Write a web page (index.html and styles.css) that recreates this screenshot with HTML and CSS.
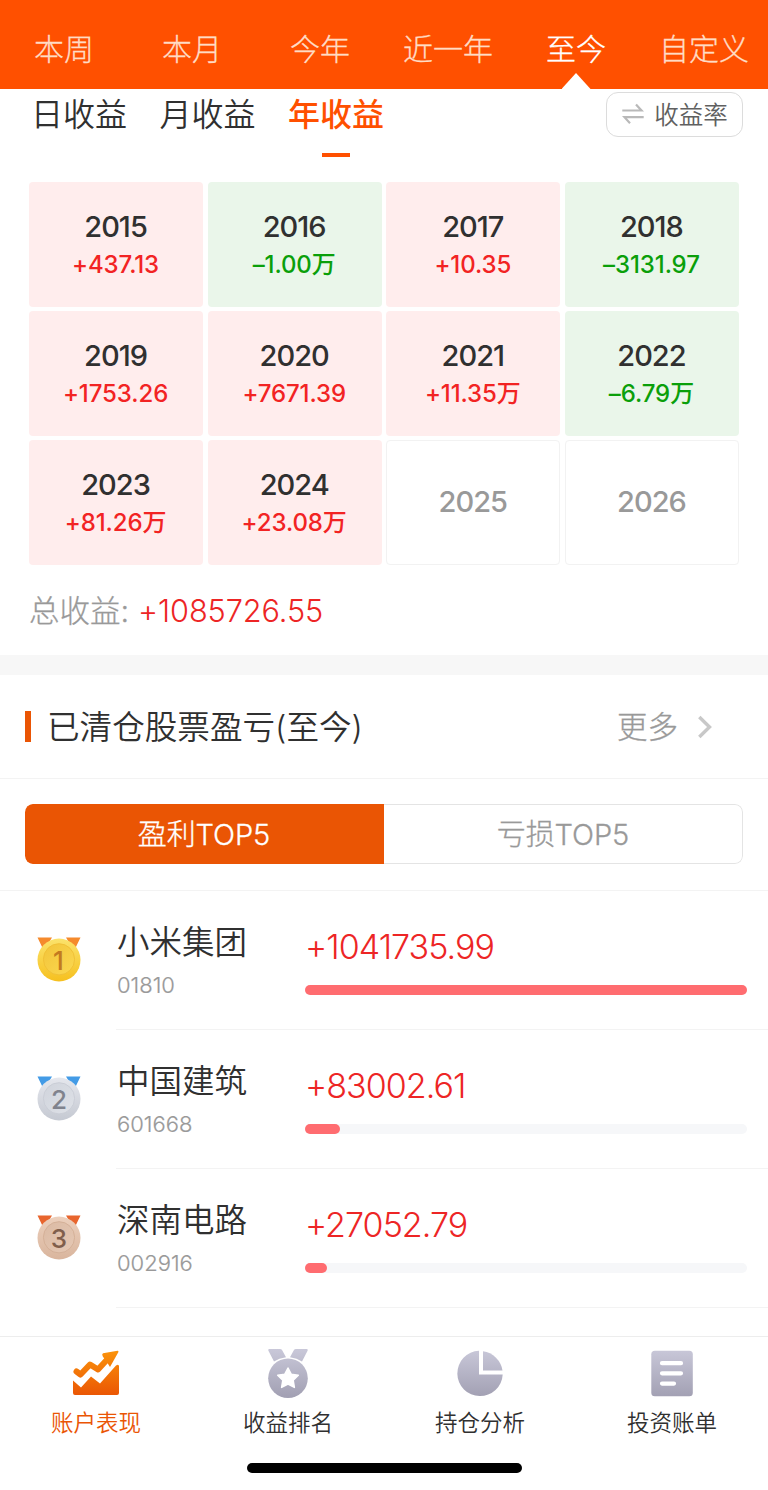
FILE: index.html
```html
<!DOCTYPE html>
<html lang="zh-CN">
<head>
<meta charset="utf-8">
<title>账户表现</title>
<link rel="stylesheet" href="styles.css">
</head>
<body>
<div class="app">
  <nav class="periods">
    <span class="period">本周</span>
    <span class="period">本月</span>
    <span class="period">今年</span>
    <span class="period">近一年</span>
    <span class="period active">至今</span>
    <span class="period">自定义</span>
  </nav>

  <section class="calendar">
    <div class="modes">
      <span class="mode">日收益</span>
      <span class="mode">月收益</span>
      <span class="mode active">年收益</span>
      <button class="rate">
        <svg class="swap" width="24" height="22" viewBox="0 0 24 22" fill="none" stroke="#b9b9b9" stroke-width="2.2"><path d="M1.300 7.500H20.500L15 1.500"/><path d="M22.700 14.200H3.500L9 20.200"/></svg>
        <span>收益率</span>
      </button>
    </div>
    <div class="years">
      <div class="cell up"><b class="year">2015</b><span class="gain">+437.13</span></div>
      <div class="cell down"><b class="year">2016</b><span class="gain">–1.00<i>万</i></span></div>
      <div class="cell up"><b class="year">2017</b><span class="gain">+10.35</span></div>
      <div class="cell down"><b class="year">2018</b><span class="gain">–3131.97</span></div>
      <div class="cell up"><b class="year">2019</b><span class="gain">+1753.26</span></div>
      <div class="cell up"><b class="year">2020</b><span class="gain">+7671.39</span></div>
      <div class="cell up"><b class="year">2021</b><span class="gain">+11.35<i>万</i></span></div>
      <div class="cell down"><b class="year">2022</b><span class="gain">–6.79<i>万</i></span></div>
      <div class="cell up"><b class="year">2023</b><span class="gain">+81.26<i>万</i></span></div>
      <div class="cell up"><b class="year">2024</b><span class="gain">+23.08<i>万</i></span></div>
      <div class="cell empty"><b class="year">2025</b></div>
      <div class="cell empty"><b class="year">2026</b></div>
    </div>
    <div class="total"><span class="total-label">总收益:</span><span class="total-value">+1085726.55</span></div>
  </section>

  <section class="cleared">
    <header class="heading">
      <h2 class="title">已清仓股票盈亏(至今)</h2>
      <a class="more"><span>更多</span><svg width="16" height="24" viewBox="0 0 16 24" fill="none" stroke="#c8c8c8" stroke-width="3.4"><path d="M2.300 2L12.500 12L2.300 22"/></svg></a>
    </header>
    <div class="switch">
      <span class="option selected">盈利TOP5</span>
      <span class="option">亏损TOP5</span>
    </div>
    <ol class="ranks">
      <li class="rank">
        <svg class="medal" width="48" height="50" viewBox="0 0 48 50">
          <defs>
            <linearGradient id="gold" x2="0" y2="1"><stop stop-color="#fbe36c"/><stop offset="1" stop-color="#f6c01f"/></linearGradient>
            <linearGradient id="goldIn" x2="1" y2="1"><stop stop-color="#f2c43a"/><stop offset="1" stop-color="#fbd850"/></linearGradient>
          </defs>
          <path fill="#f58a2c" d="M2.500 3.500H17L9 17ZM45.500 3.500H31L39 17Z"/>
          <circle cx="24" cy="26" r="21.500" fill="url(#gold)"/>
          <circle cx="24" cy="25.300" r="15.600" fill="url(#goldIn)" stroke="#efbe34" stroke-width=".9"/>
          <text class="medal-num" x="23.500" y="35.500" fill="#c37a20">1</text>
        </svg>
        <div class="stock"><span class="name">小米集团</span><span class="code">01810</span></div>
        <div class="profit"><span class="amount">+1041735.99</span><div class="bar"><div class="fill" style="width:100%"></div></div></div>
      </li>
      <li class="rank">
        <svg class="medal" width="48" height="50" viewBox="0 0 48 50">
          <defs>
            <linearGradient id="silver" x2="0" y2="1"><stop stop-color="#e5e7ed"/><stop offset="1" stop-color="#c5c9d2"/></linearGradient>
            <linearGradient id="silverIn" x2="1" y2="1"><stop stop-color="#d0d4dc"/><stop offset="1" stop-color="#dee1e7"/></linearGradient>
          </defs>
          <path fill="#439be6" d="M2.500 3.500H17L9 17ZM45.500 3.500H31L39 17Z"/>
          <circle cx="24" cy="26" r="21.500" fill="url(#silver)"/>
          <circle cx="24" cy="25.300" r="15.600" fill="url(#silverIn)" stroke="#c8ccd5" stroke-width=".9"/>
          <text class="medal-num" x="24" y="35.500" fill="#80838d">2</text>
        </svg>
        <div class="stock"><span class="name">中国建筑</span><span class="code">601668</span></div>
        <div class="profit"><span class="amount">+83002.61</span><div class="bar"><div class="fill" style="width:8%"></div></div></div>
      </li>
      <li class="rank">
        <svg class="medal" width="48" height="50" viewBox="0 0 48 50">
          <defs>
            <linearGradient id="bronze" x2="0" y2="1"><stop stop-color="#ecd0bd"/><stop offset="1" stop-color="#d9b59d"/></linearGradient>
            <linearGradient id="bronzeIn" x2="1" y2="1"><stop stop-color="#dbbaa4"/><stop offset="1" stop-color="#e5c8b4"/></linearGradient>
          </defs>
          <path fill="#e8652d" d="M2.500 3.500H17L9 17ZM45.500 3.500H31L39 17Z"/>
          <circle cx="24" cy="26" r="21.500" fill="url(#bronze)"/>
          <circle cx="24" cy="25.300" r="15.600" fill="url(#bronzeIn)" stroke="#d2ae95" stroke-width=".9"/>
          <text class="medal-num" x="24" y="35.500" fill="#805e4b">3</text>
        </svg>
        <div class="stock"><span class="name">深南电路</span><span class="code">002916</span></div>
        <div class="profit"><span class="amount">+27052.79</span><div class="bar"><div class="fill" style="width:5%"></div></div></div>
      </li>
    </ol>
  </section>

  <footer class="dock">
    <nav class="tabs">
      <a class="tab current">
        <svg width="50" height="52" viewBox="0 0 50 52">
          <defs><linearGradient id="hot" gradientUnits="userSpaceOnUse" x1="0" y1="2" x2="0" y2="48"><stop stop-color="#fb940b"/><stop offset="1" stop-color="#ea5504"/></linearGradient></defs>
          <path fill="none" stroke="url(#hot)" stroke-width="6" stroke-linejoin="round" stroke-linecap="round" d="M5.500 23.500L9.500 26.500L19 16.500L27 21.500L38 9.500"/>
          <path fill="url(#hot)" d="M32 5.200L46.500 2.800Q48 2.700 47.300 4.300L39 19L35.500 13.500L31.800 8.500Q30.500 6 32 5.200ZM2 32.500L10 39.500L20 28.500L29 35.500L45 17.500Q48 15.500 48 18.500V45Q48 47 46 47H4Q2 47 2 45Z"/>
        </svg>
        <span>账户表现</span>
      </a>
      <a class="tab">
        <svg width="50" height="52" viewBox="0 0 50 52">
          <defs><linearGradient id="cool" gradientUnits="userSpaceOnUse" x1="0" y1="1" x2="0" y2="50"><stop stop-color="#c9c8d9"/><stop offset="1" stop-color="#a19fb2"/></linearGradient></defs>
          <path fill="url(#cool)" d="M6 1H17Q18.500 1 19.200 2.300L23 9.300Q16 10.300 11 13.500L5.300 2.500Q5 1 6 1ZM44 1H33Q31.500 1 30.800 2.300L27 9.300Q34 10.300 39 13.500L44.700 2.500Q45 1 44 1Z"/>
          <circle cx="25" cy="30.300" r="19.800" fill="url(#cool)"/>
          <path fill="#fff" stroke="#fff" stroke-width="1.500" stroke-linejoin="round" d="M25 20L28.200 26.200L35.300 27.300L30.200 32.300L31.400 39.400L25 36.100L18.600 39.400L19.800 32.300L14.700 27.300L21.800 26.200Z"/>
        </svg>
        <span>收益排名</span>
      </a>
      <a class="tab">
        <svg width="50" height="52" viewBox="0 0 50 52">
          <path fill="url(#cool)" d="M24 2.700V26.500H47.700A22.700 22.700 0 1 1 24 2.700Z"/>
          <path fill="url(#cool)" d="M28 3.300A22.700 22.700 0 0 1 47.500 22.500H28Z"/>
        </svg>
        <span>持仓分析</span>
      </a>
      <a class="tab">
        <svg width="50" height="52" viewBox="0 0 50 52">
          <rect x="4.300" y="2.800" width="41.500" height="45.500" rx="3.500" fill="url(#cool)"/>
          <path fill="none" stroke="#fff" stroke-width="4.200" stroke-linecap="round" d="M15 15.200H34M15 25.300H34M15 35.600H27"/>
        </svg>
        <span>投资账单</span>
      </a>
    </nav>
    <div class="home"></div>
  </footer>
</div>
</body>
</html>
```
FILE: styles.css
```css
* { box-sizing: border-box; }
body { margin: 0; background: #fff; }
.app {
  width: 768px;
  height: 1490px;
  overflow: hidden;
  display: flex;
  flex-direction: column;
  color: #303030;
  font-family: Inter, "Noto Sans CJK SC", sans-serif;
  font-weight: 350;
}

.periods {
  height: 89px;
  flex: none;
  display: grid;
  grid-template-columns: repeat(6, 128px);
  background: #ff5000;
  color: #ffdcc5;
  font-size: 30px;
  font-weight: 300;
  -webkit-text-stroke: .3px;
  line-height: 44px;
  text-align: center;
  padding-top: 27px;
}
.period { white-space: nowrap; }
.period.active {
  color: #fff;
  display: flex;
  flex-direction: column;
  align-items: center;
  justify-content: space-between;
}
.period.active::after {
  content: "";
  width: 29px;
  height: 16px;
  background: #fff;
  clip-path: polygon(50% 0, 100% 100%, 0 100%);
}

.calendar { height: 566px; flex: none; }
.modes {
  display: flex;
  align-items: flex-start;
  height: 93px;
  padding: 3px 25px 0 31px;
  gap: 32.500px;
  font-size: 32px;
  line-height: 46px;
}
.mode { width: 96px; white-space: nowrap; }
.mode.active { color: #ff5000; font-weight: 500; }
.mode.active::after {
  content: "";
  display: block;
  width: 28px;
  height: 4px;
  margin: 15px auto 0;
  background: #ff5000;
}
.rate {
  width: 137px;
  height: 45px;
  margin-left: auto;
  padding: 0;
  display: flex;
  align-items: center;
  justify-content: center;
  gap: 9px;
  border: 1px solid #dcdcdc;
  border-radius: 12px;
  background: #fff;
  color: #606060;
  font: inherit;
  font-size: 24.500px;
}
.swap { margin-top: -2px; }
.years {
  display: grid;
  grid-template-columns: repeat(4, 1fr);
  grid-auto-rows: 124.5px;
  gap: 4.5px;
  padding: 0 29px;
}
.cell {
  border-radius: 4px;
  display: flex;
  flex-direction: column;
  align-items: center;
  justify-content: center;
}
.year { font-size: 29px; line-height: 36px; font-weight: 500; letter-spacing: -1px; margin-left: -1px; }
.up, .down { padding-top: 4px; }
.gain { margin: 2px 0 0 -1px; font-size: 24px; line-height: 36px; font-weight: 500; letter-spacing: -.1px; white-space: nowrap; }
.gain i { font-style: normal; line-height: 1; }
.up { background: #ffeded; }
.up .gain { color: #f22323; }
.down { background: #eaf6ea; }
.down .gain { color: #0a9f0a; }
.empty { border: 1px solid #f2f2f2; color: #999; }
.total {
  display: flex;
  gap: 10px;
  margin: 23px 0 0 29px;
  font-size: 30.500px;
  line-height: 45px;
}
.total-label { color: #999; font-weight: 300; -webkit-text-stroke: .3px; }
.total-value { color: #ed2525; font-size: 30.700px; margin-left: -1px; letter-spacing: -.1px; }

.cleared { flex: none; height: 681px; border-top: 20px solid #f7f7f7; }
.heading {
  height: 104px;
  display: flex;
  align-items: center;
  justify-content: space-between;
  padding: 0 55px 0 25px;
  border-bottom: 1px solid #f3f3f3;
}
.title {
  display: flex;
  align-items: center;
  gap: 16px;
  margin: 0;
  font-size: 32.600px;
  font-weight: 350;
  line-height: 46px;
}
.title::before { content: ""; width: 6px; height: 31px; background: #ea5504; }
.more {
  display: flex;
  align-items: center;
  gap: 19px;
  color: #999;
  font-size: 30.500px;
  line-height: 44px;
  font-weight: 300;
}
.more span { -webkit-text-stroke: .3px; }
.switch {
  display: flex;
  height: 60px;
  margin: 25px 25px 26px;
  border-radius: 8px;
  overflow: hidden;
  font-size: 29px;
  line-height: 59px;
  font-weight: 300;
  letter-spacing: -.1px;
  text-align: center;
  -webkit-text-stroke: .3px;
}
.option { flex: 1; color: #999; border: 1px solid #e4e4e4; border-left: 0; border-radius: 0 8px 8px 0; }
.option.selected { background: #ea5504; color: #fff; border-color: #ea5504; border-radius: 8px 0 0 8px; }
.ranks { list-style: none; margin: 0; padding: 0; border-top: 1px solid #f3f3f3; }
.rank { display: flex; height: 139px; padding: 0 21px 0 35px; }
.medal { flex: none; margin-top: 43px; }
.medal-num { font-family: Inter, sans-serif; font-size: 26px; font-weight: 500; text-anchor: middle; }
.stock {
  width: 188px;
  margin-left: 33px;
  flex: none;
  display: flex;
  flex-direction: column;
  border-bottom: 1px solid #f3f3f3;
  padding: 28px 0 0 1px;
}
.name { font-size: 32.500px; line-height: 48px; }
.code { color: #999; font-size: 22px; line-height: 28px; margin-top: 4px; font-weight: 350; -webkit-text-stroke: .2px; }
.profit { flex: 1; margin-right: -21px; padding: 34px 21px 0 1px; border-bottom: 1px solid #f3f3f3; }
.amount { display: block; font-size: 34px; line-height: 44px; letter-spacing: -.95px; color: #ed2525; }
.bar { height: 10px; margin-top: 16px; border-radius: 5px; background: #f6f7f9; }
.fill { height: 10px; border-radius: 5px; background: #ff6c70; }

.dock { flex: 1; display: flex; flex-direction: column; align-items: center; background: #fff; border-top: 1px solid #ededed; }
.tabs { width: 100%; display: grid; grid-template-columns: repeat(4, 1fr); padding-top: 11px; }
.tab { display: flex; flex-direction: column; align-items: center; color: #303030; font-size: 22.500px; line-height: 32px; }
.tab span { margin-top: 7px; }
.tab.current { color: #ea5504; }
.home { width: 275px; height: 10px; margin-top: 24px; border-radius: 5px; background: #000; }
```
